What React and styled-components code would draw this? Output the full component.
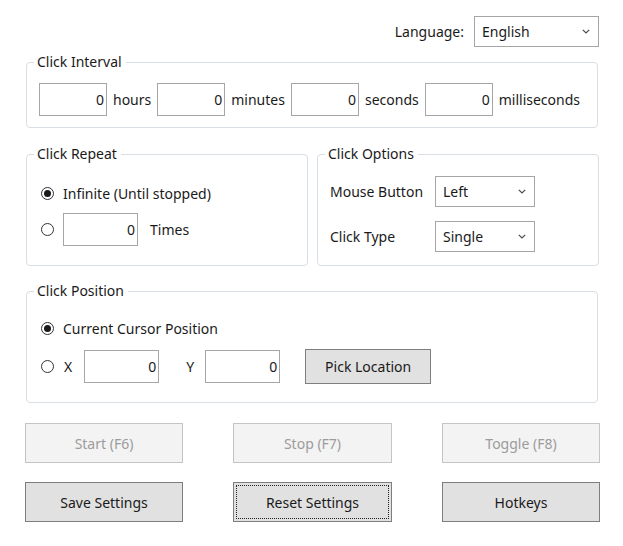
import * as React from "react";
import styled, { createGlobalStyle } from "styled-components";

const GlobalStyle = createGlobalStyle`
  html, body {
    margin: 0;
    padding: 0;
    background: #fff;
  }
  body {
    font-family: "Noto Sans", "Open Sans", sans-serif;
    font-size: 14px;
    color: #000;
  }
`;

function Chevron() {
    return (
        <svg width="8" height="5" viewBox="0 0 8 5">
            <path d="M0.8 0.8 L4 4 L7.2 0.8" fill="none" stroke="#4a4a4a" strokeWidth="1.2" />
        </svg>
    );
}

function Radio({ checked }) {
    return <RadioCircle>{checked && <RadioDot />}</RadioCircle>;
}

export default function App() {
    return (
        <Page>
            <GlobalStyle />
            <LanguageRow>
                <Label>Language:</Label>
                <Select $width={125} $height={31}>
                    <span>English</span>
                    <Chevron />
                </Select>
            </LanguageRow>

            <Group>
                <GroupTitle>Click Interval</GroupTitle>
                <IntervalRow>
                    <NumberBox $width={68}>0</NumberBox>
                    <Label>hours</Label>
                    <NumberBox $width={68}>0</NumberBox>
                    <Label>minutes</Label>
                    <NumberBox $width={68}>0</NumberBox>
                    <Label>seconds</Label>
                    <NumberBox $width={68}>0</NumberBox>
                    <Label>milliseconds</Label>
                </IntervalRow>
            </Group>

            <GroupPair>
                <Group $height={112}>
                    <GroupTitle>Click Repeat</GroupTitle>
                    <RadioList>
                        <RadioRow>
                            <Radio checked />
                            <Label>Infinite (Until stopped)</Label>
                        </RadioRow>
                        <RadioRow>
                            <Radio />
                            <NumberBox $width={75}>0</NumberBox>
                            <Label $indent={3}>Times</Label>
                        </RadioRow>
                    </RadioList>
                </Group>
                <Group $height={112}>
                    <GroupTitle>Click Options</GroupTitle>
                    <OptionsGrid>
                        <Label>Mouse Button</Label>
                        <Select $width={100} $height={31}>
                            <span>Left</span>
                            <Chevron />
                        </Select>
                        <Label>Click Type</Label>
                        <Select $width={100} $height={31}>
                            <span>Single</span>
                            <Chevron />
                        </Select>
                    </OptionsGrid>
                </Group>
            </GroupPair>

            <Group $height={112}>
                <GroupTitle>Click Position</GroupTitle>
                <RadioList $top={24} $gap={9}>
                    <RadioRow>
                        <Radio checked />
                        <Label>Current Cursor Position</Label>
                    </RadioRow>
                    <PositionRow>
                        <Radio />
                        <Label>X</Label>
                        <NumberBox $width={75} $indent={2}>0</NumberBox>
                        <Label $indent={17}>Y</Label>
                        <NumberBox $width={75} $indent={1}>0</NumberBox>
                        <Button $width={126} $height={35} $indent={15}>Pick Location</Button>
                    </PositionRow>
                </RadioList>
            </Group>

            <ButtonGrid>
                <Button $disabled>Start (F6)</Button>
                <Button $disabled>Stop (F7)</Button>
                <Button $disabled>Toggle (F8)</Button>
                <Button>Save Settings</Button>
                <Button $focused>Reset Settings</Button>
                <Button>Hotkeys</Button>
            </ButtonGrid>
        </Page>
    );
}

const Page = styled.div`
  width: 623px;
  height: 546px;
  box-sizing: border-box;
  padding: 16px 24px 0 26px;
  display: flex;
  flex-direction: column;
`;

const LanguageRow = styled.div`
  display: flex;
  justify-content: flex-end;
  align-items: center;
  gap: 10px;
  margin-bottom: 15px;
`;

const Label = styled.span`
  color: #1a1a1a;
  white-space: nowrap;
  margin-left: ${(p) => p.$indent || 0}px;
`;

const Select = styled.div`
  box-sizing: border-box;
  width: ${(p) => p.$width}px;
  height: ${(p) => p.$height}px;
  border: 1px solid #a6a6a6;
  background: #fff;
  display: flex;
  align-items: center;
  justify-content: space-between;
  padding: 0 8px 0 7px;
  color: #1a1a1a;
`;

const Group = styled.div`
  position: relative;
  box-sizing: border-box;
  border: 1px solid #d9dee4;
  border-radius: 4px;
  height: ${(p) => p.$height || 66}px;
  margin-right: 1px;
  flex: none;
`;

const GroupTitle = styled.div`
  position: absolute;
  top: -11px;
  left: 7px;
  padding: 0 4px 0 3px;
  background: #fff;
  color: #1a1a1a;
  line-height: 20px;
`;

const IntervalRow = styled.div`
  display: flex;
  align-items: center;
  gap: 6px;
  padding: 20px 0 0 12px;
`;

const NumberBox = styled.div`
  box-sizing: border-box;
  width: ${(p) => p.$width}px;
  height: 33px;
  margin-left: ${(p) => p.$indent || 0}px;
  border: 1px solid #a6a6a6;
  background: #fff;
  display: flex;
  align-items: center;
  justify-content: flex-end;
  padding-right: 2px;
  color: #1a1a1a;
`;

const GroupPair = styled.div`
  display: grid;
  grid-template-columns: 282px 282px;
  column-gap: 9px;
  margin: 26px 0 25px;

  & > ${Group} {
    margin-right: 0;
  }
`;

const RadioList = styled.div`
  display: flex;
  flex-direction: column;
  gap: ${(p) => p.$gap || 8}px;
  padding: ${(p) => p.$top || 26}px 0 0 14px;
`;

const RadioRow = styled.div`
  display: flex;
  align-items: center;
  gap: 9px;
  min-height: 24px;
`;

const PositionRow = styled(RadioRow)`
  gap: 10px;
`;

const RadioCircle = styled.span`
  box-sizing: border-box;
  width: 13px;
  height: 13px;
  border: 1px solid #333;
  border-radius: 50%;
  background: #fff;
  display: inline-flex;
  align-items: center;
  justify-content: center;
  flex-shrink: 0;
`;

const RadioDot = styled.span`
  width: 7px;
  height: 7px;
  border-radius: 50%;
  background: #1a1a1a;
`;

const OptionsGrid = styled.div`
  display: grid;
  grid-template-columns: 105px 100px;
  row-gap: 14px;
  align-items: center;
  padding: 21px 0 0 12px;
`;

const Button = styled.div`
  position: relative;
  box-sizing: border-box;
  width: ${(p) => p.$width || "100%"}${(p) => (p.$width ? "px" : "")};
  height: ${(p) => p.$height || 40}px;
  margin-left: ${(p) => p.$indent || 0}px;
  display: flex;
  align-items: center;
  justify-content: center;
  background: ${(p) => (p.$disabled ? "#f3f3f3" : "#e1e1e1")};
  border: 1px solid ${(p) => (p.$disabled ? "#c4c4c4" : "#7e7e7e")};
  color: ${(p) => (p.$disabled ? "#9c9c9c" : "#1a1a1a")};

  &::after {
    content: "";
    display: ${(p) => (p.$focused ? "block" : "none")};
    position: absolute;
    inset: 2px;
    border: 1px dotted #222;
  }
`;

const ButtonGrid = styled.div`
  display: grid;
  grid-template-columns: 158px 159px 158px;
  column-gap: 50px;
  row-gap: 19px;
  margin: 20px 0 0 -1px;
`;
